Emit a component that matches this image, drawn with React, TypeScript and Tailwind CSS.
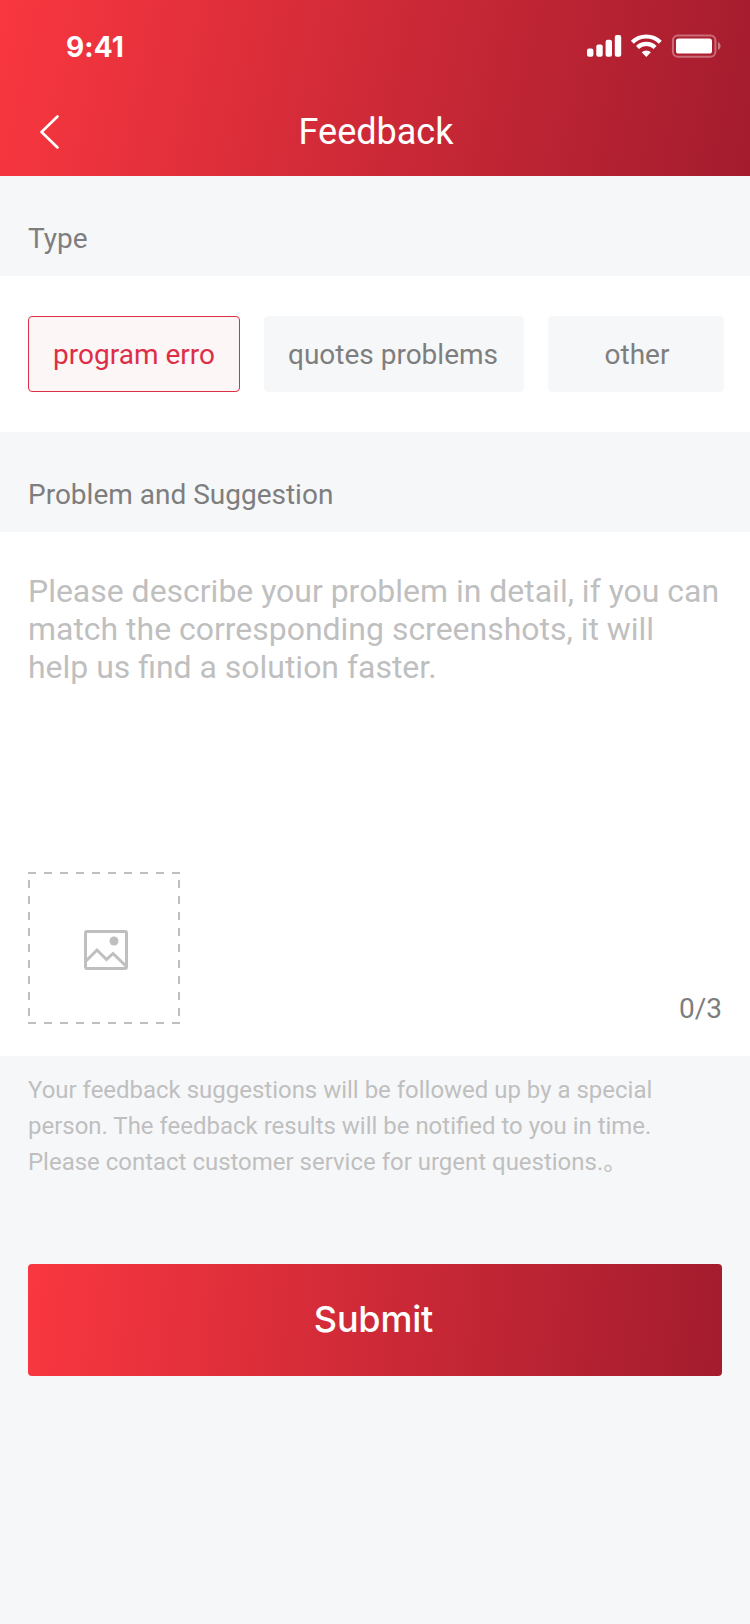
import { useState } from "react";

const types = [
  { label: "program erro", size: "w-[212px]" },
  { label: "quotes problems", size: "w-[260px] pr-[2px]" },
  { label: "other", size: "w-[176px] pl-[2px]" },
];

function StatusBar() {
  return (
    <div className="flex h-[88px] items-center justify-between pl-[66px] pr-7 pt-1">
      <span className="pt-[2px] font-['Inter',sans-serif] text-[28px] font-bold leading-none tracking-[0.1px]">
        9:41
      </span>
      <svg width="136" height="24" viewBox="0 0 136 24" fill="#fff">
        <rect x="1" y="14.4" width="6.4" height="8.4" rx="2" />
        <rect x="10.3" y="10.4" width="6.4" height="12.4" rx="2" />
        <rect x="19.6" y="5.8" width="6.4" height="17" rx="2" />
        <rect x="28.8" y="1" width="6.4" height="21.8" rx="2" />
        <g fill="none" stroke="#fff" strokeWidth="4.2">
          <path d="M46.3 8.2A20 20 0 0 1 74.3 8.2" />
          <path d="M51.5 13.5A12.6 12.6 0 0 1 69.1 13.5" />
        </g>
        <path d="M60.3 22.9L55.7 18.3A6.6 6.6 0 0 1 64.9 18.3Z" />
        <rect x="86.9" y="1.4" width="42.5" height="21.4" rx="5" fill="none" stroke="#fff" strokeOpacity="0.35" strokeWidth="2" />
        <rect x="90" y="4.6" width="36" height="15" rx="2.6" />
        <path d="M132 8v8c3.4-1.6 3.4-6.4 0-8z" fillOpacity="0.4" />
      </svg>
    </div>
  );
}

function Header() {
  return (
    <header className="h-[176px] bg-[linear-gradient(102deg,#f93740_0%,#a31c2e_100%)] text-white">
      <StatusBar />
      <div className="grid h-[88px] grid-cols-[100px_1fr_98px] items-center">
        <button aria-label="Back" className="pl-[38px]">
          <svg width="24" height="36" viewBox="0 0 24 36" fill="none" stroke="#fff" strokeWidth="2.6" strokeLinecap="round" strokeLinejoin="round">
            <path d="M19.5 2.5L3.5 18L19.5 33.5" />
          </svg>
        </button>
        <h1 className="text-center text-[36px] leading-[42px]">Feedback</h1>
      </div>
    </header>
  );
}

function SectionTitle({ children }: { children: string }) {
  return (
    <h2 className="h-[100px] px-7 pt-[46px] text-[28px] leading-[33px] text-[#7e7e7e]">
      {children}
    </h2>
  );
}

export default function App() {
  const [selected, setSelected] = useState(0);
  return (
    <div className="flex min-h-[1624px] w-[750px] flex-col bg-[#f6f7f9] font-['Roboto','Noto_Sans_CJK_SC',sans-serif]">
      <Header />
      <SectionTitle>Type</SectionTitle>
      <div className="flex h-[156px] items-center gap-6 bg-white pl-7">
        {types.map((type, i) => (
          <button
            key={type.label}
            onClick={() => setSelected(i)}
            className={`${type.size} h-[76px] shrink-0 whitespace-nowrap rounded border text-[28px] leading-[33px] ${
              i === selected
                ? "border-[#dc2f47] bg-[#fdf6f7] text-[#dc2f47]"
                : "border-[#f6f7f9] bg-[#f6f7f9] text-[#7e7e7e]"
            }`}
          >
            {type.label}
          </button>
        ))}
      </div>
      <SectionTitle>Problem and Suggestion</SectionTitle>
      <div className="flex h-[524px] flex-col justify-between bg-white px-7 pb-8 pt-10">
        <p className="text-[31.96px] leading-[38px] text-[#bfbfbf]">
          Please describe your problem in detail, if you can
          <br />
          match the corresponding screenshots, it will
          <br />
          help us find a solution faster.
        </p>
        <div className="flex items-end justify-between">
          <svg width="152" height="152" viewBox="0 0 152 152" fill="none" stroke="#bfbfbf">
            <g strokeWidth="2" strokeDasharray="8 8">
              <path d="M0 1H152" />
              <path d="M0 151H152" />
              <path d="M1 8V152" />
              <path d="M151 8V152" />
            </g>
            <g strokeWidth="3">
              <rect x="57.5" y="59.5" width="41" height="37" rx="1.5" />
              <path d="M58 89L69 78L78.5 87.5L85 81.5L98.5 94.5" />
            </g>
            <circle cx="86" cy="69" r="4.5" fill="#bfbfbf" stroke="none" />
          </svg>
          <span className="text-[28px] leading-[31px] text-[#7e7e7e]">0/3</span>
        </div>
      </div>
      <p className="px-7 pt-4 text-[23.97px] leading-[36px] text-[#bfbfbf]">
        Your feedback suggestions will be followed up by a special
        <br />
        person. The feedback results will be notified to you in time.
        <br />
        Please contact customer service for urgent questions.。
      </p>
      <button className="mx-7 mt-[84px] h-[112px] rounded bg-[linear-gradient(96deg,#f93740_0%,#a31c2e_100%)] pb-[2px] pr-[3px] font-['Inter',sans-serif] text-[36px] font-medium tracking-[-0.2px] text-white">
        Submit
      </button>
    </div>
  );
}
